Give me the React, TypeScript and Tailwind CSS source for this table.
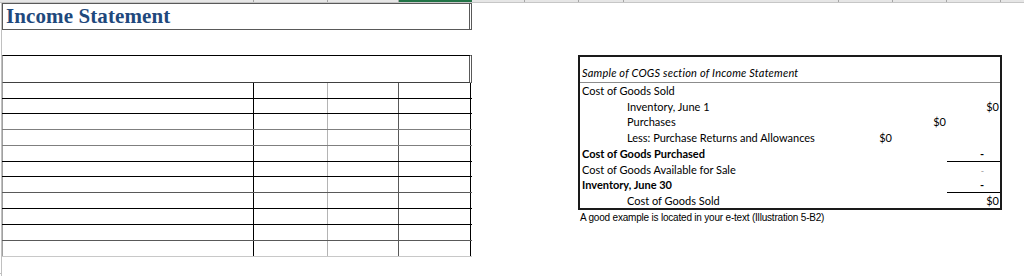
import React from "react";

// heights of the sheet rows below the header cell (bottom gridline included)
const rowHeights = [16, 15, 16, 16, 16, 15, 16, 16, 16, 16, 16];
const rowLines = [
  "border-black",
  "border-black",
  "border-[#7f7f7f]",
  "border-[#7f7f7f]",
  "border-black",
  "border-black",
  "border-[#595959]",
  "border-black",
  "border-black",
  "border-[#595959]",
  "border-[#c8c8c8]",
];

const cogsRows = [
  { label: "Cost of Goods Sold", indent: false, bold: false, c: "", d: "", e: "", line: false },
  { label: "Inventory, June 1", indent: true, bold: false, c: "", d: "", e: "$0", line: false },
  { label: "Purchases", indent: true, bold: false, c: "", d: "$0", e: "", line: false },
  { label: "Less: Purchase Returns and Allowances", indent: true, bold: false, c: "$0", d: "", e: "", line: false },
  { label: "Cost of Goods Purchased", indent: false, bold: true, c: "", d: "", e: "-", line: true },
  { label: "Cost of Goods Available for Sale", indent: false, bold: false, c: "", d: "", e: "–", line: false },
  { label: "Inventory, June 30", indent: false, bold: true, c: "", d: "", e: "-", line: true },
  { label: "Cost of Goods Sold", indent: true, bold: false, c: "", d: "", e: "$0", line: false },
];

const Amount = ({ value }: { value: string }) => {
  if (value === "-") return <span className="pr-[16px] font-bold">-</span>;
  if (value === "–") return <span className="pr-[16px] text-[#9a9a9a] text-[9px]">-</span>;
  return <span className="pr-[1px]">{value}</span>;
};

const App = () => {
  return (
    <div className="w-[1024px] h-[276px] bg-white overflow-hidden flex flex-col">
      {/* column header strip */}
      <div className="h-[3px] flex bg-[#e6e6e6] border-b border-[#c6c6c6]">
        <div className="w-[254px] border-r border-[#a6a6a6]" />
        <div className="w-[74px] border-r border-[#a6a6a6]" />
        <div className="w-[71px] border-r border-[#a6a6a6]" />
        <div className="w-[73px] bg-[#217346]" />
        <div className="w-[53px] border-r border-[#a6a6a6]" />
        <div className="w-[54px] border-r border-[#a6a6a6]" />
        <div className="w-[45px] border-r border-[#a6a6a6]" />
        <div className="w-[215px] border-r border-[#a6a6a6]" />
        <div className="w-[54px] border-r border-[#a6a6a6]" />
        <div className="w-[54px] border-r border-[#a6a6a6]" />
        <div className="w-[54px] border-r border-[#a6a6a6]" />
        <div className="flex-1" />
      </div>

      <div className="flex flex-1">
        {/* row header edge */}
        <div className="w-[2px] border-r border-[#c0c0c0] relative">
          <div className="absolute left-0 bottom-[2px] w-[2px] h-[1px] bg-[#c0c0c0]" />
        </div>

        <div className="flex flex-col">
          {/* title */}
          <div className="w-[470px] h-[27px] border-l border-t border-b border-[#595959] border-r-[3px] border-r-[#595959] [border-right-style:double] flex items-center pl-[3px]">
            <span className="text-[#1f497d] text-[21px] font-bold leading-none font-['Liberation_Serif',serif] tracking-[0.1px]">
              Income Statement
            </span>
          </div>

          <div className="flex mt-[25px]">
            {/* blank statement grid */}
            <div className="w-[470px] flex flex-col">
              <div className="h-[28px] border-t border-black border-b border-b-[#404040] border-l border-l-[#a0a0a0] border-r-[3px] border-r-[#595959] [border-right-style:double]" />
              {rowHeights.map((h, i) => (
                <div
                  key={i}
                  className={`flex border-b ${rowLines[i]}`}
                  style={{ height: h }}
                >
                  <div className="w-[252px] border-l border-[#a0a0a0] border-r border-r-black" />
                  <div className="w-[74px] border-r border-[#b4b4b4]" />
                  <div className="w-[71px] border-r border-[#595959]" />
                  <div className="w-[72px] border-r border-black" />
                </div>
              ))}
            </div>

            {/* COGS sample */}
            <div className="ml-[106px] flex flex-col font-['Lato',sans-serif] text-[11px] text-black">
              <div className="w-[424px] border-2 border-[#1a1a1a]">
                <div className="h-[26px] border-b border-[#8c8c8c] flex items-end pl-[2px] pb-[1px]">
                  <span className="italic leading-[16px] tracking-[0.2px]">
                    Sample of COGS section of Income Statement
                  </span>
                </div>
                {cogsRows.map((row, i) => (
                  <div
                    key={i}
                    className="grid grid-cols-[44px_215px_54px_54px_53px] leading-[15px]"
                    style={{ height: rowHeights[i] - (i === cogsRows.length - 1 ? 1 : 0) }}
                  >
                    <div className={`whitespace-nowrap pl-[2px] ${row.indent ? "" : "col-span-2"} ${row.bold ? "font-bold" : ""}`}>
                      {row.indent ? "" : row.label}
                    </div>
                    {row.indent && (
                      <div className="whitespace-nowrap pl-[3px]">{row.label}</div>
                    )}
                    <div className="text-right">{row.c && <Amount value={row.c} />}</div>
                    <div className="text-right">{row.d && <Amount value={row.d} />}</div>
                    <div className={`text-right ${row.line ? "border-b border-black" : ""}`}>
                      {row.e && <Amount value={row.e} />}
                    </div>
                  </div>
                ))}
              </div>
              <div className="pl-[2px] pt-[1px] font-['Liberation_Sans',Arial,sans-serif] text-[10px] leading-[14px] tracking-[-0.2px] whitespace-nowrap">
                A good example is located in your e-text (Illustration 5-B2)
              </div>
            </div>
          </div>
        </div>
      </div>
    </div>
  );
};

export default App;
